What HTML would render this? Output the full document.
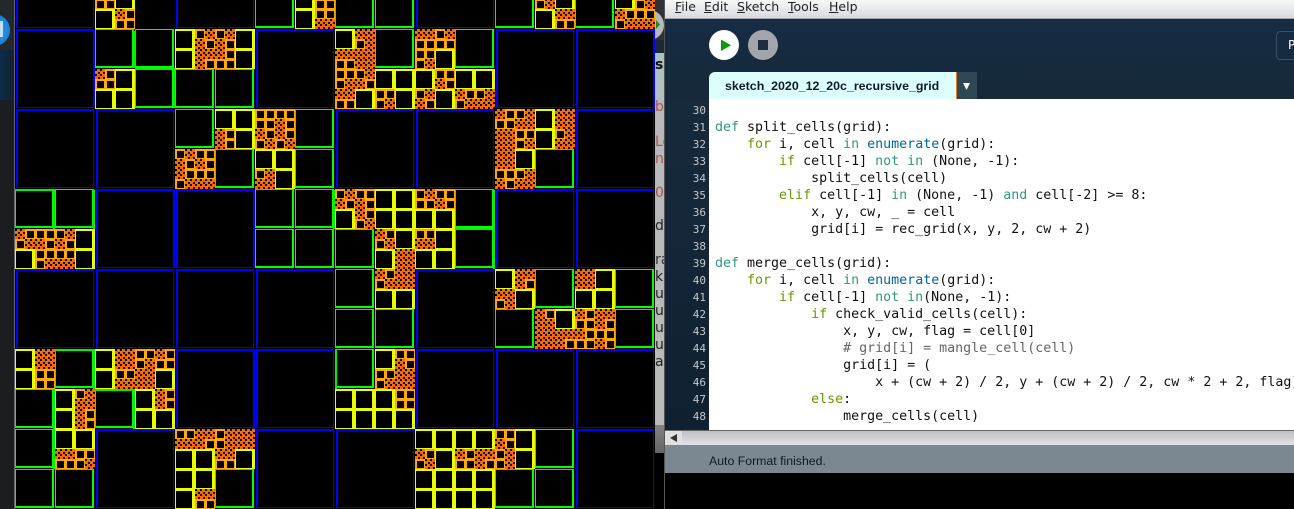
<!DOCTYPE html>
<html><head><meta charset="utf-8"><style>
html,body{margin:0;padding:0;background:#000;}
#r{position:relative;width:1294px;height:509px;overflow:hidden;background:#000;font-family:"DejaVu Sans",sans-serif;}
#r div{position:absolute;}
pre{margin:0;position:absolute;font-family:"DejaVu Sans Mono",monospace;font-size:13.3px;line-height:17px;color:#111;white-space:pre;}
.k{color:#33997e}.f{color:#669900}.n{color:#006699}.m{color:#666}
.sl{position:absolute;left:656px;font-size:14px;white-space:nowrap;line-height:14px}
u{text-decoration:underline}
</style></head><body><div id="r">
<div style="left:0;top:0;width:14px;height:509px;background:#1b1d20"></div>
<div style="left:0;top:0;width:14px;height:100px;background:#25282b"></div>
<div style="left:0;top:50px;width:14px;height:50px;background:linear-gradient(90deg,#0b2d4d,#16212b)"></div>
<div style="left:-22px;top:14px;width:32px;height:32px;border-radius:50%;background:radial-gradient(circle at 50% 50%,#3aa0f0,#0d74cc)"></div>
<div style="left:0;top:21px;width:3px;height:16px;background:#bfe0f8"></div>
<div style="left:14px;top:0;width:1px;height:509px;background:#666"></div>

<svg style="position:absolute;left:0;top:0" width="656" height="509" viewBox="0 0 656 509" shape-rendering="crispEdges">
<defs>
<path id="B" d="M1 0h78v2h-78zM1 0h2v79h-2zM78 0h1v79h-1zM1 78h78v1h-78z" fill="#0000ff"/>
<path id="G" d="M0 0h39v1h-39zM0 0h1v39h-1zM37 0h2v39h-2zM0 37h39v2h-39z" fill="#00ff00"/>
<g id="y"><rect width="20" height="20" fill="#000"/><path d="M0 0h20v2h-20zM17 0h3v20h-3zM0 0h1v20h-1zM0 19h20v1h-20z" fill="#e8ff00"/></g>
<g id="s"><rect width="20" height="20" fill="#ffaa00"/><path d="M2 2h7v7h-7zM12 2h7v7h-7zM2 12h7v7h-7zM12 12h7v7h-7z" fill="#000"/></g>
<g id="c"><rect width="10" height="10" fill="#ff6600"/><path d="M0 0h2v2h-2zM5 0h2v2h-2zM3 3h2v2h-2zM8 3h2v2h-2zM0 5h2v2h-2zM5 5h2v2h-2zM3 8h2v2h-2zM8 8h2v2h-2z" fill="#000"/></g>
<g id="o"><use href="#c"/><use href="#c" x="10"/><use href="#c" y="10"/><use href="#c" x="10" y="10"/></g>
</defs>
<rect x="15" width="641" height="509" fill="#000"/>
<use href="#B" x="15" y="-51"/><use href="#B" x="175" y="-51"/><use href="#B" x="415" y="-51"/>
<use href="#B" x="15" y="29"/><use href="#B" x="255" y="29"/><use href="#B" x="495" y="29"/><use href="#B" x="575" y="29"/>
<use href="#B" x="15" y="109"/><use href="#B" x="95" y="109"/><use href="#B" x="335" y="109"/><use href="#B" x="415" y="109"/><use href="#B" x="575" y="109"/>
<use href="#B" x="95" y="189"/><use href="#B" x="175" y="189"/><use href="#B" x="495" y="189"/><use href="#B" x="575" y="189"/>
<use href="#B" x="15" y="269"/><use href="#B" x="95" y="269"/><use href="#B" x="175" y="269"/><use href="#B" x="255" y="269"/><use href="#B" x="415" y="269"/>
<use href="#B" x="175" y="349"/><use href="#B" x="255" y="349"/><use href="#B" x="415" y="349"/><use href="#B" x="495" y="349"/><use href="#B" x="575" y="349"/>
<use href="#B" x="95" y="429"/><use href="#B" x="255" y="429"/><use href="#B" x="335" y="429"/><use href="#B" x="575" y="429"/>
<path d="M253 190h2v78h-2zM253 349h2v80h-2zM653 29h2v80h-2zM93 30h2v78h-2zM173 190h2v78h-2z" fill="#0000ff"/>

<use href="#G" x="255" y="-11"/><use href="#G" x="335" y="-11"/><use href="#G" x="375" y="-11"/><use href="#G" x="495" y="-11"/><use href="#G" x="575" y="-11"/>
<use href="#G" x="95" y="29"/><use href="#G" x="135" y="29"/><use href="#G" x="135" y="69"/><use href="#G" x="175" y="69"/><use href="#G" x="215" y="69"/><use href="#G" x="175" y="109"/><use href="#G" x="295" y="109"/><use href="#G" x="215" y="149"/><use href="#G" x="295" y="149"/>
<use href="#G" x="375" y="29"/><use href="#G" x="455" y="29"/>
<use href="#G" x="15" y="189"/><use href="#G" x="55" y="189"/><use href="#G" x="255" y="189"/><use href="#G" x="295" y="189"/><use href="#G" x="255" y="229"/><use href="#G" x="295" y="229"/><use href="#G" x="335" y="229"/><use href="#G" x="455" y="189"/><use href="#G" x="455" y="229"/><use href="#G" x="535" y="149"/>
<use href="#G" x="335" y="269"/><use href="#G" x="335" y="309"/><use href="#G" x="375" y="309"/><use href="#G" x="535" y="269"/><use href="#G" x="615" y="269"/><use href="#G" x="495" y="309"/><use href="#G" x="615" y="309"/>
<use href="#G" x="55" y="349"/><use href="#G" x="15" y="389"/><use href="#G" x="95" y="389"/><use href="#G" x="335" y="349"/>
<use href="#G" x="15" y="429"/><use href="#G" x="15" y="469"/><use href="#G" x="55" y="469"/><use href="#G" x="215" y="469"/><use href="#G" x="535" y="429"/><use href="#G" x="495" y="469"/><use href="#G" x="535" y="469"/>
<path d="M133 31h3v37h-3zM135 68h40v2h-40zM173 70h2v38h-2zM53 189h2v40h-2zM15 189h40v2h-40zM93 190h2v39h-2zM493 190h2v79h-2zM455 228h40v2h-40zM333 190h2v39h-2zM55 349h40v2h-40zM93 350h2v39h-2zM53 389h2v80h-2zM133 389h2v40h-2zM95 389h40v2h-40zM335 349h2v40h-2z" fill="#00f000"/>

<!-- top row -->
<use href="#s" x="95" y="-11"/><use href="#y" x="115" y="-11"/><use href="#y" x="95" y="9"/><use href="#s" x="115" y="9"/><use href="#c" x="115" y="9"/>
<use href="#y" x="295" y="-11"/><use href="#s" x="315" y="-11"/><use href="#y" x="295" y="9"/><use href="#s" x="315" y="9"/><use href="#c" x="315" y="19"/><use href="#c" x="325" y="19"/>
<use href="#s" x="535" y="-11"/><use href="#c" x="545" y="-1"/><use href="#y" x="555" y="-11"/><use href="#y" x="535" y="9"/><use href="#s" x="555" y="9"/><use href="#c" x="555" y="9"/><use href="#c" x="565" y="9"/>
<use href="#y" x="615" y="-11"/><use href="#s" x="635" y="-11"/><use href="#c" x="645" y="-1"/><use href="#s" x="615" y="9"/><use href="#c" x="615" y="9"/><use href="#c" x="625" y="19"/><use href="#s" x="635" y="9"/><use href="#c" x="635" y="19"/><use href="#c" x="645" y="19"/>
<!-- row 29 -->
<use href="#s" x="95" y="69"/><use href="#c" x="95" y="69"/><use href="#y" x="115" y="69"/><use href="#y" x="95" y="89"/><use href="#y" x="115" y="89"/>
<use href="#y" x="175" y="29"/><use href="#s" x="195" y="29"/><use href="#c" x="205" y="29"/><use href="#c" x="195" y="39"/><use href="#s" x="215" y="29"/><use href="#c" x="225" y="29"/><use href="#c" x="215" y="39"/><use href="#y" x="235" y="29"/>
<use href="#y" x="175" y="49"/><use href="#s" x="195" y="49"/><use href="#c" x="195" y="49"/><use href="#c" x="205" y="49"/><use href="#c" x="195" y="59"/><use href="#s" x="215" y="49"/><use href="#c" x="215" y="49"/><use href="#y" x="235" y="49"/>
<use href="#y" x="335" y="29"/><use href="#s" x="355" y="29"/><use href="#c" x="355" y="29"/><use href="#c" x="365" y="29"/><use href="#c" x="365" y="39"/>
<use href="#s" x="335" y="49"/><use href="#c" x="335" y="49"/><use href="#c" x="345" y="49"/><use href="#o" x="355" y="49"/>
<use href="#s" x="335" y="69"/><use href="#c" x="345" y="79"/><use href="#s" x="355" y="69"/><use href="#c" x="365" y="69"/><use href="#c" x="355" y="79"/>
<use href="#s" x="335" y="89"/><use href="#c" x="335" y="89"/><use href="#c" x="345" y="89"/><use href="#y" x="355" y="89"/>
<use href="#y" x="375" y="69"/><use href="#y" x="395" y="69"/><use href="#s" x="375" y="89"/><use href="#c" x="385" y="99"/><use href="#y" x="395" y="89"/>
<use href="#s" x="415" y="29"/><use href="#c" x="415" y="29"/><use href="#c" x="425" y="29"/><use href="#s" x="435" y="29"/><use href="#c" x="445" y="29"/>
<use href="#s" x="415" y="49"/><use href="#c" x="425" y="59"/><use href="#y" x="435" y="49"/>
<use href="#y" x="415" y="69"/><use href="#s" x="435" y="69"/><use href="#c" x="435" y="79"/><use href="#y" x="455" y="69"/><use href="#y" x="475" y="69"/>
<use href="#s" x="415" y="89"/><use href="#c" x="415" y="99"/><use href="#c" x="425" y="89"/><use href="#y" x="435" y="89"/><use href="#s" x="455" y="89"/><use href="#c" x="455" y="89"/><use href="#c" x="465" y="99"/><use href="#s" x="475" y="89"/><use href="#c" x="485" y="89"/><use href="#c" x="475" y="99"/><use href="#c" x="485" y="99"/>
<!-- row 109 -->
<use href="#y" x="215" y="109"/><use href="#y" x="235" y="109"/><use href="#s" x="215" y="129"/><use href="#c" x="215" y="129"/><use href="#c" x="215" y="139"/><use href="#y" x="235" y="129"/>
<use href="#s" x="255" y="109"/><use href="#s" x="275" y="109"/><use href="#c" x="275" y="119"/><use href="#s" x="255" y="129"/><use href="#c" x="255" y="129"/><use href="#c" x="265" y="139"/><use href="#s" x="275" y="129"/><use href="#c" x="275" y="129"/><use href="#c" x="285" y="139"/>
<use href="#s" x="175" y="149"/><use href="#c" x="185" y="149"/><use href="#c" x="175" y="159"/><use href="#s" x="195" y="149"/><use href="#c" x="195" y="159"/>
<use href="#s" x="175" y="169"/><use href="#c" x="175" y="169"/><use href="#c" x="185" y="179"/><use href="#s" x="195" y="169"/><use href="#c" x="195" y="179"/><use href="#c" x="205" y="179"/>
<use href="#y" x="255" y="149"/><use href="#y" x="275" y="149"/><use href="#s" x="255" y="169"/><use href="#c" x="265" y="169"/><use href="#c" x="255" y="179"/><use href="#c" x="265" y="179"/><use href="#y" x="275" y="169"/>
<use href="#s" x="495" y="109"/><use href="#c" x="495" y="109"/><use href="#s" x="515" y="109"/><use href="#c" x="525" y="109"/><use href="#c" x="515" y="119"/><use href="#c" x="525" y="119"/>
<use href="#o" x="495" y="129"/><use href="#s" x="515" y="129"/><use href="#c" x="525" y="139"/><use href="#o" x="495" y="149"/><use href="#y" x="515" y="149"/>
<use href="#s" x="495" y="169"/><use href="#c" x="495" y="179"/><use href="#s" x="515" y="169"/><use href="#c" x="525" y="169"/><use href="#c" x="515" y="179"/><use href="#c" x="525" y="179"/>
<use href="#y" x="535" y="109"/><use href="#o" x="555" y="109"/><use href="#y" x="535" y="129"/><use href="#s" x="555" y="129"/><use href="#c" x="565" y="129"/><use href="#c" x="555" y="139"/><use href="#c" x="565" y="139"/>
<!-- row 189 -->
<use href="#s" x="15" y="229"/><use href="#c" x="15" y="229"/><use href="#c" x="25" y="239"/><use href="#s" x="35" y="229"/><use href="#c" x="35" y="239"/><use href="#s" x="55" y="229"/><use href="#c" x="65" y="229"/><use href="#c" x="55" y="239"/><use href="#y" x="75" y="229"/>
<use href="#y" x="15" y="249"/><use href="#s" x="35" y="249"/><use href="#c" x="45" y="259"/><use href="#s" x="55" y="249"/><use href="#c" x="55" y="259"/><use href="#c" x="65" y="259"/><use href="#y" x="75" y="249"/>
<use href="#s" x="335" y="189"/><use href="#c" x="345" y="189"/><use href="#c" x="335" y="199"/><use href="#s" x="355" y="189"/><use href="#c" x="355" y="199"/><use href="#y" x="335" y="209"/><use href="#s" x="355" y="209"/><use href="#c" x="355" y="209"/><use href="#c" x="365" y="219"/>
<use href="#y" x="375" y="189"/><use href="#y" x="395" y="189"/><use href="#y" x="375" y="209"/><use href="#y" x="395" y="209"/>
<use href="#s" x="375" y="229"/><use href="#c" x="375" y="229"/><use href="#c" x="385" y="239"/><use href="#y" x="395" y="229"/><use href="#y" x="375" y="249"/><use href="#o" x="395" y="249"/>
<use href="#s" x="415" y="189"/><use href="#c" x="425" y="189"/><use href="#s" x="435" y="189"/><use href="#c" x="435" y="199"/><use href="#y" x="415" y="209"/><use href="#y" x="435" y="209"/>
<use href="#s" x="415" y="229"/><use href="#c" x="415" y="239"/><use href="#c" x="425" y="239"/><use href="#y" x="435" y="229"/><use href="#y" x="415" y="249"/><use href="#y" x="435" y="249"/>
<!-- row 269 -->
<use href="#s" x="375" y="269"/><use href="#c" x="375" y="269"/><use href="#c" x="385" y="279"/><use href="#o" x="395" y="269"/><use href="#y" x="375" y="289"/><use href="#y" x="395" y="289"/>
<use href="#y" x="495" y="269"/><use href="#s" x="515" y="269"/><use href="#c" x="515" y="269"/><use href="#c" x="525" y="269"/><use href="#c" x="515" y="279"/>
<use href="#s" x="495" y="289"/><use href="#c" x="495" y="289"/><use href="#c" x="505" y="289"/><use href="#c" x="505" y="299"/><use href="#y" x="515" y="289"/>
<use href="#o" x="575" y="269"/><use href="#y" x="595" y="269"/><use href="#y" x="575" y="289"/><use href="#y" x="595" y="289"/>
<use href="#s" x="535" y="309"/><use href="#c" x="535" y="309"/><use href="#c" x="535" y="319"/><use href="#c" x="545" y="319"/><use href="#y" x="555" y="309"/>
<use href="#o" x="535" y="329"/><use href="#s" x="555" y="329"/><use href="#c" x="555" y="329"/><use href="#c" x="565" y="329"/><use href="#c" x="555" y="339"/>
<use href="#s" x="575" y="309"/><use href="#c" x="575" y="309"/><use href="#s" x="595" y="309"/><use href="#c" x="595" y="309"/><use href="#c" x="605" y="309"/><use href="#c" x="595" y="319"/>
<use href="#s" x="575" y="329"/><use href="#c" x="575" y="329"/><use href="#s" x="595" y="329"/><use href="#c" x="595" y="339"/>
<!-- row 349 -->
<use href="#y" x="15" y="349"/><use href="#o" x="35" y="349"/><use href="#y" x="15" y="369"/><use href="#s" x="35" y="369"/>
<use href="#y" x="55" y="389"/><use href="#s" x="75" y="389"/><use href="#c" x="85" y="389"/><use href="#c" x="75" y="399"/><use href="#c" x="85" y="399"/>
<use href="#y" x="55" y="409"/><use href="#s" x="75" y="409"/><use href="#c" x="75" y="409"/><use href="#c" x="75" y="419"/>
<use href="#y" x="95" y="349"/><use href="#o" x="115" y="349"/><use href="#s" x="135" y="349"/><use href="#c" x="145" y="359"/><use href="#s" x="155" y="349"/><use href="#c" x="155" y="349"/>
<use href="#y" x="95" y="369"/><use href="#s" x="115" y="369"/><use href="#c" x="115" y="379"/><use href="#c" x="125" y="379"/><use href="#o" x="135" y="369"/><use href="#y" x="155" y="369"/>
<use href="#y" x="135" y="389"/><use href="#s" x="155" y="389"/><use href="#c" x="155" y="389"/><use href="#c" x="155" y="399"/><use href="#y" x="135" y="409"/><use href="#y" x="155" y="409"/>
<use href="#y" x="375" y="349"/><use href="#s" x="395" y="349"/><use href="#c" x="395" y="359"/><use href="#s" x="375" y="369"/><use href="#c" x="385" y="379"/><use href="#o" x="395" y="369"/>
<use href="#y" x="335" y="389"/><use href="#y" x="355" y="389"/><use href="#y" x="375" y="389"/><use href="#s" x="395" y="389"/>
<use href="#y" x="335" y="409"/><use href="#y" x="355" y="409"/><use href="#y" x="375" y="409"/><use href="#y" x="395" y="409"/>
<!-- row 429 -->
<use href="#y" x="55" y="429"/><use href="#y" x="75" y="429"/><use href="#s" x="55" y="449"/><use href="#c" x="55" y="449"/><use href="#c" x="65" y="449"/><use href="#s" x="75" y="449"/><use href="#c" x="85" y="459"/>
<use href="#s" x="175" y="429"/><use href="#c" x="175" y="439"/><use href="#c" x="185" y="439"/><use href="#s" x="195" y="429"/><use href="#c" x="195" y="429"/><use href="#c" x="205" y="429"/><use href="#c" x="195" y="439"/><use href="#s" x="215" y="429"/><use href="#c" x="225" y="429"/><use href="#c" x="225" y="439"/><use href="#o" x="235" y="429"/>
<use href="#y" x="175" y="449"/><use href="#y" x="195" y="449"/><use href="#s" x="215" y="449"/><use href="#c" x="215" y="449"/><use href="#c" x="225" y="449"/><use href="#y" x="235" y="449"/>
<use href="#y" x="175" y="469"/><use href="#y" x="195" y="469"/><use href="#y" x="175" y="489"/><use href="#s" x="195" y="489"/><use href="#c" x="195" y="489"/><use href="#c" x="205" y="489"/>
<use href="#y" x="415" y="429"/><use href="#y" x="435" y="429"/><use href="#y" x="455" y="429"/><use href="#y" x="475" y="429"/>
<use href="#s" x="415" y="449"/><use href="#c" x="415" y="449"/><use href="#c" x="425" y="459"/><use href="#y" x="435" y="449"/><use href="#s" x="455" y="449"/><use href="#c" x="455" y="449"/><use href="#s" x="475" y="449"/><use href="#c" x="475" y="449"/><use href="#c" x="485" y="449"/><use href="#c" x="475" y="459"/>
<use href="#y" x="415" y="469"/><use href="#y" x="435" y="469"/><use href="#y" x="455" y="469"/><use href="#y" x="475" y="469"/><use href="#y" x="415" y="489"/><use href="#y" x="435" y="489"/><use href="#y" x="455" y="489"/><use href="#y" x="475" y="489"/>
<use href="#s" x="495" y="429"/><use href="#c" x="495" y="439"/><use href="#y" x="515" y="429"/><use href="#s" x="495" y="449"/><use href="#c" x="505" y="449"/><use href="#c" x="505" y="459"/><use href="#y" x="515" y="449"/>
</svg>

<!-- sliver between canvas and IDE -->
<div style="left:655px;top:0;width:9px;height:509px;background:#000"></div>
<div style="left:655px;top:0;width:9px;height:40px;background:#2e3236;overflow:hidden">
<div style="left:-21px;top:10px;width:30px;height:30px;border-radius:50%;background:#b8b8b8"></div>
</div>
<svg style="position:absolute;left:655px;top:19px" width="6" height="12"><path d="M1 1v9l4-4.5z" fill="#1a8a1a"/></svg>
<div style="left:655px;top:40px;width:9px;height:13px;background:#18293a"></div>
<div style="left:655px;top:53px;width:9px;height:47px;background:linear-gradient(#a9c2c2,#b2c0c0)"></div>
<div style="left:655px;top:100px;width:9px;height:325px;background:#b9b9b9"></div>
<div style="left:655px;top:425px;width:9px;height:28px;background:linear-gradient(#808080,#666)"></div>
<div style="left:664px;top:0;width:1px;height:509px;background:#555"></div>
<div style="left:655px;top:40px;width:9px;height:385px;overflow:hidden">
<span class="sl" style="left:0;top:18px;color:#111;font-weight:bold">sk</span>
<span class="sl" style="left:0;top:60px;color:#a55">b</span>
<span class="sl" style="left:0;top:95px;color:#a55">Le</span>
<span class="sl" style="left:0;top:112px;color:#a55">n</span>
<span class="sl" style="left:0;top:146px;color:#a55">0.</span>
<span class="sl" style="left:0;top:179px;color:#222">do</span>
<span class="sl" style="left:0;top:213px;color:#333">ra</span>
<span class="sl" style="left:0;top:230px;color:#222">kp</span>
<span class="sl" style="left:0;top:247px;color:#222">ur</span>
<span class="sl" style="left:0;top:264px;color:#222">ur</span>
<span class="sl" style="left:0;top:281px;color:#222">ur</span>
<span class="sl" style="left:0;top:298px;color:#222">ur</span>
<span class="sl" style="left:0;top:315px;color:#222">ac</span>
</div>

<!-- IDE -->
<div style="left:665px;top:0;width:629px;height:18px;background:linear-gradient(#f7f8f8,#d9dade);border-bottom:1px solid #a5a5ad;font-size:12.5px;line-height:14px;color:#222">
<span style="position:absolute;left:10px;top:0"><u>F</u>ile</span>
<span style="position:absolute;left:39px;top:0"><u>E</u>dit</span>
<span style="position:absolute;left:72px;top:0"><u>S</u>ketch</span>
<span style="position:absolute;left:123px;top:0"><u>T</u>ools</span>
<span style="position:absolute;left:164px;top:0"><u>H</u>elp</span>
</div>
<div style="left:665px;top:19px;width:629px;height:80px;background:linear-gradient(#152c44,#17283a)"></div>
<div style="left:709px;top:30px;width:30px;height:30px;border-radius:50%;background:#fff"></div>
<svg style="position:absolute;left:709px;top:30px" width="30" height="30"><path d="M12 9.5V21L22 15.2Z" fill="#0a9a0a"/></svg>
<div style="left:748px;top:30px;width:30px;height:30px;border-radius:50%;background:#a2a6aa"></div>
<div style="left:758px;top:40px;width:10px;height:10px;background:#1b2f42"></div>
<div style="left:1276px;top:31px;width:30px;height:27px;border:1px solid #3c5264;border-radius:4px;color:#fff;font-size:12px;line-height:27px;text-indent:11px">P</div>
<div style="left:709px;top:72px;width:247px;height:27px;background:#dcfffb;border-radius:6px 0 0 0;font-family:'Liberation Sans',sans-serif;font-weight:bold;font-size:12.4px;line-height:28px;color:#0d1c28;text-indent:16px;white-space:nowrap">sketch_2020_12_20c_recursive_grid</div>
<div style="left:956px;top:72px;width:1px;height:27px;background:#e87a1c"></div>
<div style="left:957px;top:72px;width:20px;height:27px;background:#2f4655"></div>
<svg style="position:absolute;left:957px;top:72px" width="20" height="27"><path d="M6 11h7l-3.5 7z" fill="#fff"/></svg>
<div style="left:665px;top:99px;width:44px;height:331px;background:linear-gradient(#172a3c,#0f2030)"></div>
<div style="left:709px;top:99px;width:585px;height:331px;background:#fff"></div>
<pre style="left:669px;top:102px;width:37px;text-align:right;font-size:11px;color:#c4c8cc;font-family:'DejaVu Sans Mono',monospace">30
31
32
33
34
35
36
37
38
39
40
41
42
43
44
45
46
47
48</pre>
<pre style="left:715px;top:102px;height:328px;width:579px;overflow:hidden">

<span class="k">def</span> split_cells(grid):
    <span class="f">for</span> i, cell <span class="k">in</span> <span class="n">enumerate</span>(grid):
        <span class="f">if</span> cell[-1] <span class="k">not in</span> (None, -1):
            split_cells(cell)
        <span class="f">elif</span> cell[-1] <span class="k">in</span> (None, -1) <span class="k">and</span> cell[-2] &gt;= 8:
            x, y, cw, _ = cell
            grid[i] = rec_grid(x, y, 2, cw + 2)

<span class="k">def</span> merge_cells(grid):
    <span class="f">for</span> i, cell <span class="k">in</span> <span class="n">enumerate</span>(grid):
        <span class="f">if</span> cell[-1] <span class="k">not in</span>(None, -1):
            <span class="f">if</span> check_valid_cells(cell):
                x, y, cw, flag = cell[0]
                <span class="m"># grid[i] = mangle_cell(cell)</span>
                grid[i] = (
                    x + (cw + 2) / 2, y + (cw + 2) / 2, cw * 2 + 2, flag]
            <span class="f">else</span>:
                merge_cells(cell)</pre>
<div style="left:665px;top:430px;width:629px;height:15px;background:linear-gradient(#bfbfc4,#e2e2e6);border-top:1px solid #666;box-sizing:border-box"></div>
<div style="left:665px;top:431px;width:17px;height:14px;background:#e0e0e0"></div>
<svg style="position:absolute;left:665px;top:431px" width="17" height="14"><path d="M5 7l7-4v8z" fill="#333"/></svg>
<div style="left:665px;top:445px;width:629px;height:28px;background:#7b8892;color:#12181d;font-family:'Liberation Sans',sans-serif;font-size:12.3px;line-height:32px;text-indent:44px;white-space:nowrap">Auto Format finished.</div>
<div style="left:665px;top:473px;width:629px;height:36px;background:#000"></div>
</div></body></html>
